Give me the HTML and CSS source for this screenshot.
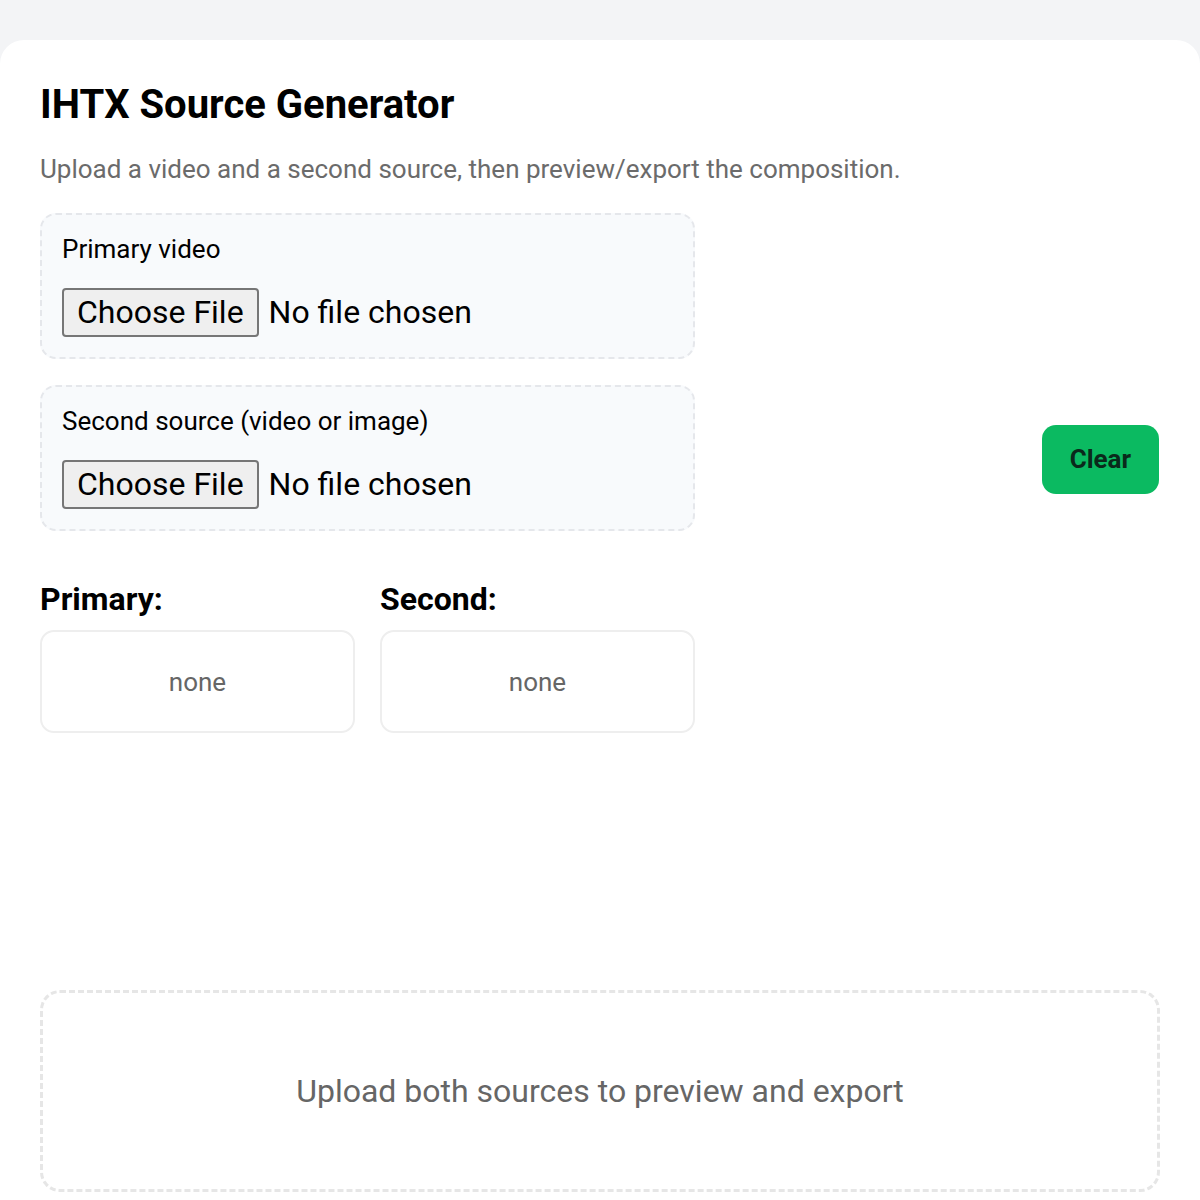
FILE: index.html
```html
<!DOCTYPE html>
<html lang="en">
<head>
    <meta charset="UTF-8">
    <meta name="viewport" content="width=device-width, initial-scale=1.0">
    <title>IHTX Source Generator</title>
    <link rel="stylesheet" href="styles.css">
</head>
<body>
    <main class="card">
        <h1>IHTX Source Generator</h1>
        <p class="subtitle">Upload a video and a second source, then preview/export the composition.</p>

        <div class="top-row">
            <div class="uploads">
                <label class="upload-box">
                    <span class="upload-label">Primary video</span>
                    <input type="file" id="primaryInput" accept="video/*">
                </label>
                <label class="upload-box">
                    <span class="upload-label">Second source (video or image)</span>
                    <input type="file" id="secondInput" accept="video/*,image/*">
                </label>
            </div>
            <button class="clear-button" id="clearButton">Clear</button>
        </div>

        <div class="sources">
            <div class="source">
                <h2>Primary:</h2>
                <div class="source-box" id="primaryName">none</div>
            </div>
            <div class="source">
                <h2>Second:</h2>
                <div class="source-box" id="secondName">none</div>
            </div>
        </div>

        <div class="preview" id="preview">
            Upload both sources to preview and export
        </div>
    </main>
</body>
</html>
```

FILE: styles.css
```css
* {
    margin: 0;
    padding: 0;
    box-sizing: border-box;
}

body {
    font-family: Roboto, 'Liberation Sans', sans-serif;
    background: #f3f4f6;
    color: #000;
    padding-top: 40px;
}

.card {
    background: #fff;
    border-radius: 24px 24px 0 0;
    padding: 41px 40px 40px;
    min-height: 1160px;
}

h1 {
    font-size: 40px;
    line-height: 48px;
    font-weight: 700;
    margin-bottom: 24px;
}

.subtitle {
    font-size: 26px;
    line-height: 32px;
    color: #6b6b6b;
    margin-bottom: 28px;
}

.top-row {
    display: flex;
    justify-content: space-between;
}

.uploads {
    width: 655px;
    display: flex;
    flex-direction: column;
    gap: 26px;
}

.upload-box {
    display: flex;
    flex-direction: column;
    align-items: flex-start;
    gap: 25px;
    padding: 20px;
    background: #f8fafc;
    border: 2px dashed #e5e7eb;
    border-radius: 16px;
}

.upload-label {
    font-size: 26px;
    line-height: 28px;
}

.upload-box input {
    font-family: Roboto, 'Liberation Sans', sans-serif;
    font-size: 32px;
    color: #000;
}

.upload-box input::file-selector-button {
    font: inherit;
    line-height: 37px;
    padding: 4px 13px;
    margin-right: 10px;
    background: #efefef;
    border: 2px solid #767676;
    border-radius: 4px;
    color: #000;
}

.clear-button {
    align-self: flex-end;
    margin-bottom: 37px;
    margin-right: 1px;
    background: #0bba61;
    color: #0a2a1b;
    font-family: Roboto, 'Liberation Sans', sans-serif;
    font-size: 26px;
    font-weight: 700;
    line-height: 30px;
    padding: 19px 28px 20px;
    border: none;
    border-radius: 14px;
    cursor: pointer;
}

.sources {
    display: grid;
    grid-template-columns: 315px 315px;
    gap: 25px;
    margin-top: 50px;
}

.source h2 {
    font-size: 32px;
    line-height: 37px;
    font-weight: 700;
    margin-bottom: 12px;
}

.source-box {
    height: 103px;
    display: flex;
    align-items: center;
    justify-content: center;
    border: 2px solid #eeeeee;
    border-radius: 14px;
    font-size: 26px;
    color: #666;
}

.preview {
    margin-top: 257px;
    height: 202px;
    display: flex;
    align-items: center;
    justify-content: center;
    border: 3px dashed #e6e6e6;
    border-radius: 20px;
    font-size: 32px;
    color: #666;
}
```
